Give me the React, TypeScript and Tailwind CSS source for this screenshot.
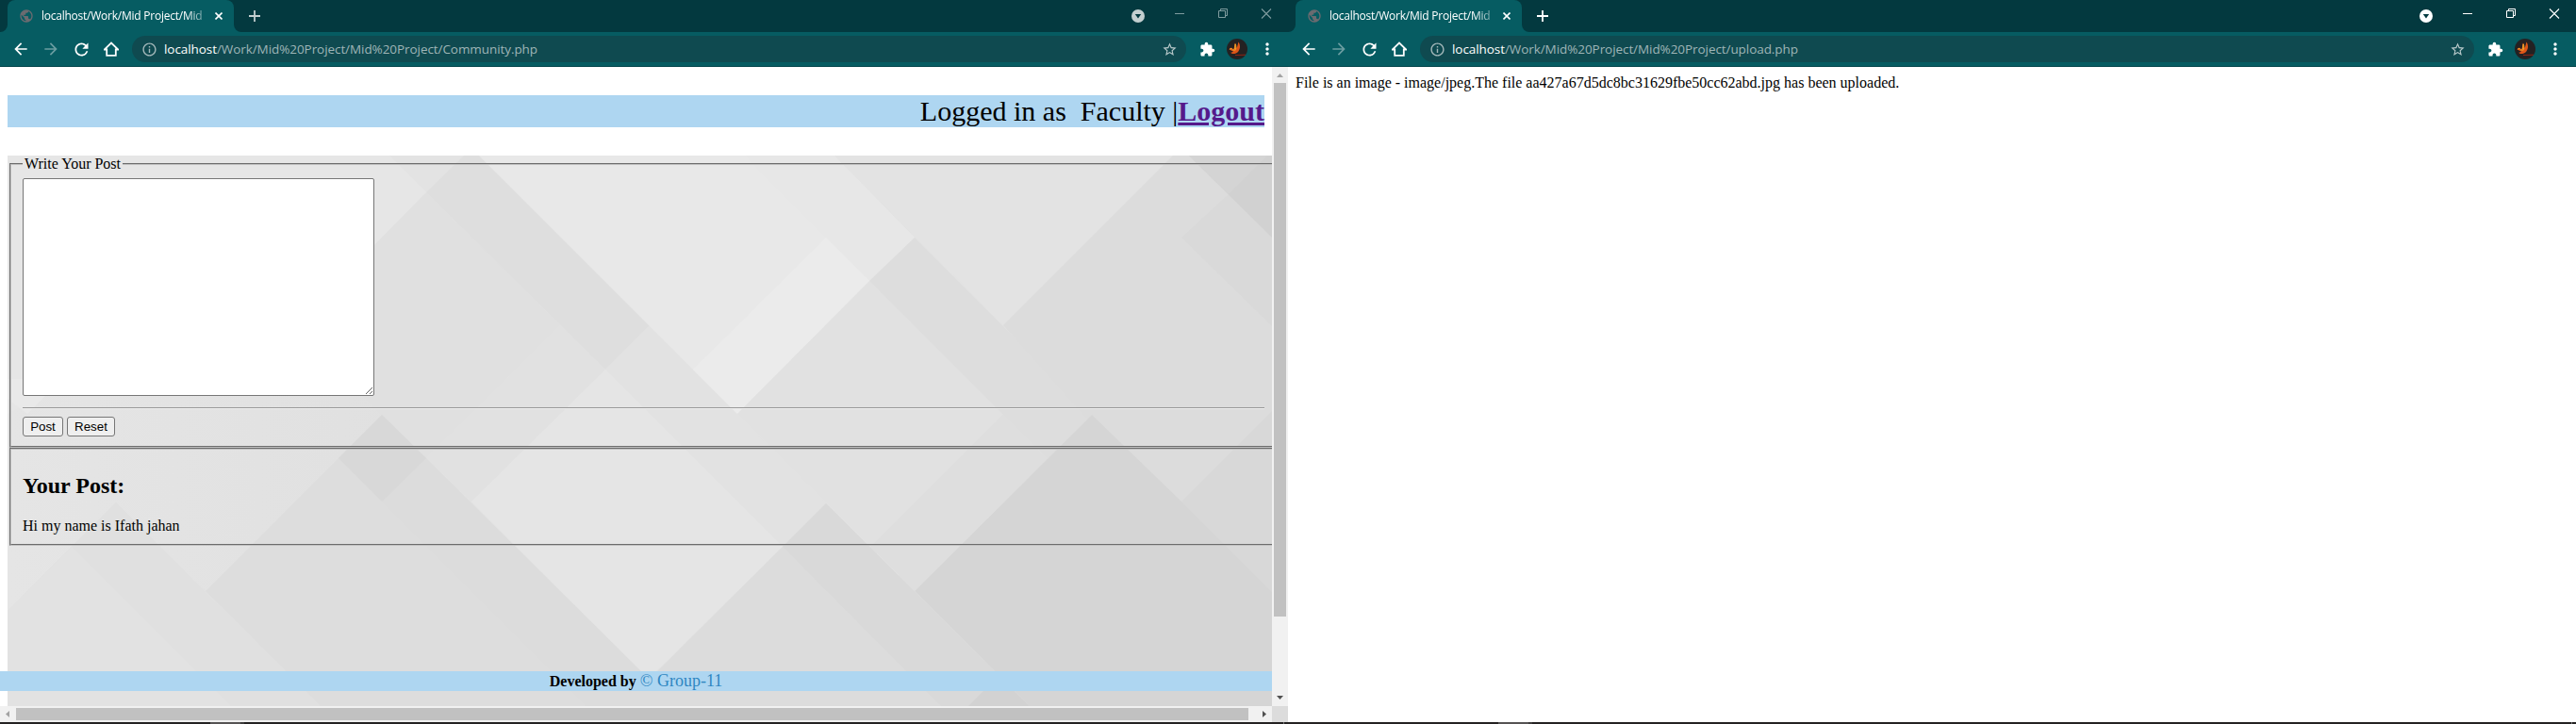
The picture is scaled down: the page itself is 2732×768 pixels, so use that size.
import React from "react";
import { MdArrowBack, MdArrowForward, MdRefresh, MdInfoOutline, MdStarBorder, MdExtension, MdMoreVert, MdPublic } from "react-icons/md";

function TitleBar({ active }: { active: boolean }) {
  const tone = active ? "text-white" : "text-[#7f9c9f]";
  return (
    <div className="flex h-[34px] bg-[#03393f]">
      <div className="flex w-2 shrink-0 items-end bg-[#065c62]">
        <div className="h-full w-2 rounded-br-lg bg-[#03393f]" />
      </div>
      <div className="flex w-[240px] shrink-0 items-center rounded-t-lg bg-[#065c62] pl-[12px]">
        <MdPublic className="size-4 shrink-0 text-[#6b6b70]" />
        <div className="ml-2 w-[176px] [mask-image:linear-gradient(to_right,black_154px,transparent_182px)]">
          <div className="whitespace-nowrap font-['Open_Sans',sans-serif] text-[12px] leading-4 tracking-[-0.24px] text-white">
            localhost/Work/Mid Project/Mid
          </div>
        </div>
        <svg className="ml-[8px] size-2 shrink-0" viewBox="0 0 8 8">
          <path d="M0.5 0.5L7.5 7.5M7.5 0.5L0.5 7.5" stroke="white" strokeWidth="1.6" />
        </svg>
      </div>
      <div className="w-2 shrink-0 bg-[#065c62]">
        <div className="h-full w-2 rounded-bl-lg bg-[#03393f]" />
      </div>
      <div className={"flex flex-1 items-center pl-[8px] " + (active ? "text-white" : "text-[#c3cfd0]")}>
        <svg className="size-3" viewBox="0 0 12 12">
          <path d="M6 0V12M0 6H12" stroke="currentColor" strokeWidth="1.8" />
        </svg>
        <svg className="ml-auto size-[14px]" viewBox="0 0 14 14">
          <circle cx="7" cy="7" r="7" fill="currentColor" />
          <path d="M3.8 5H10.2L7 9.4Z" fill="#03393f" />
        </svg>
      </div>
      <div className={"ml-[14px] flex h-7 w-[138px] shrink-0 items-center " + tone}>
        <svg className="h-[11px] w-[46px]" viewBox="0 0 46 11">
          <path d="M18 5.5H28" stroke="currentColor" />
        </svg>
        <svg className="h-[11px] w-[46px]" viewBox="0 0 46 11">
          <path d="M18.5 2.5H25.5V9.5H18.5ZM20.5 2.5V0.5H27.5V7.5H25.5" fill="none" stroke="currentColor" />
        </svg>
        <svg className="h-[11px] w-[46px]" viewBox="0 0 46 11">
          <path d="M18 0.5L28 10.5M28 0.5L18 10.5" stroke="currentColor" strokeWidth="1.1" />
        </svg>
      </div>
    </div>
  );
}

function Avatar() {
  return (
    <svg className="size-[22px]" viewBox="0 0 22 22">
      <circle cx="11" cy="11" r="11" fill="#242122" />
      <path d="M2.5 11.5C4 9 5.6 9.4 6.8 11.6C8.6 10 7.6 7 9 4.5C10 6 9.6 8.4 10.6 10C11.8 8 11.6 5.5 12.6 3.6C14.6 7 14.6 10.6 12.4 13.4C10 16.4 5.5 17 4.2 14.8C6 14.8 7 14 6.5 12.8C5 13.5 4 11.5 2.5 11.5Z" fill="#de5518" />
      <path d="M3 11.2C5 9.8 6 11 7 12.6C9.3 11 8.4 8 9.2 5.8C10.2 8 10.2 10.6 8.6 12.8" fill="none" stroke="#f3b02c" strokeWidth="0.9" />
      <path d="M9 17.5L20 17.2" stroke="#8e2516" />
    </svg>
  );
}

function Toolbar({ path }: { path: string }) {
  return (
    <div className="flex h-[37px] items-center border-b border-[#03454b] bg-[#065c62] pl-[6px] text-white">
      <div className="flex w-8 justify-center"><MdArrowBack className="size-[20px]" /></div>
      <div className="flex w-8 justify-center"><MdArrowForward className="size-[20px] text-[#6b9da1]" /></div>
      <div className="flex w-8 justify-center"><MdRefresh className="size-[21px]" /></div>
      <div className="flex w-8 justify-center">
        <svg className="size-4" viewBox="0 0 16 16">
          <path d="M0.7 8.5H3.2V14.9H12.8V8.5H15.3L8 1.5Z" fill="none" stroke="white" strokeWidth="1.8" />
        </svg>
      </div>
      <div className="ml-[6px] flex h-7 w-[1118px] items-center rounded-full bg-[#0f4a50] pl-[10px] pr-[9px]">
        <MdInfoOutline className="size-[17px] text-[#a5b9bb]" />
        <div className="ml-[7px] whitespace-nowrap font-['Open_Sans',sans-serif] text-[13.5px] leading-5 tracking-[-0.07px] text-[#9fb5b7]">
          <span className="text-white">localhost</span>{path}
        </div>
        <MdStarBorder className="ml-auto size-[17px] text-[#b7c8c9]" />
      </div>
      <div className="ml-[6px] flex w-8 justify-center"><MdExtension className="size-[17px]" /></div>
      <div className="flex w-8 justify-center"><Avatar /></div>
      <div className="flex w-8 justify-center"><MdMoreVert className="size-5" /></div>
    </div>
  );
}

function Taskbar() {
  return (
    <div className="flex h-[2px] bg-[#242222] pl-[223px]">
      <div className="w-[32px] bg-[#555353]" />
      <div className="w-[4px] bg-[#3d3b3b]" />
      <div className="ml-auto mr-1 w-px bg-[#777]" />
    </div>
  );
}

function DiamondBackdrop() {
  return (
    <svg className="absolute inset-0 h-[584px] w-[1341px]" viewBox="8 165 1341 584">
      <defs>
        <linearGradient id="slope" x1="0" y1="0" x2="1" y2="0">
          <stop offset="0" stopColor="#e5e5e5" />
          <stop offset="1" stopColor="#e0e0e0" />
        </linearGradient>
      </defs>
      <rect x="8" y="165" width="1341" height="584" fill="#e2e2e2" />
      <path d="M8 165H492L218 439L8 620Z" fill="#e6e6e6" />
      <path d="M413 165H492L452 204Z" fill="#e3e3e3" />
      <path d="M8 439L76 402H397L452 486L218 627L123 533L8 648Z" fill="url(#slope)" />
      <path d="M8 402H66L29 439L8 423Z" fill="#e9e9e9" />
      <path d="M397 260L452 204L594 345L452 486L405 440L290 325Z" fill="#e0e0e0" />
      <path d="M492 165H508L689 345L642 392L452 204Z" fill="#dedede" />
      <path d="M594 345L642 392L500 532L452 486Z" fill="#e1e1e1" />
      <path d="M689 345L876 534L830 580L642 392Z" fill="#e2e2e2" />
      <path d="M642 392L830 580L688 720L500 532Z" fill="#e5e5e5" />
      <path d="M508 165H885L970 252L782 439Z" fill="#e8e8e8" />
      <path d="M790 165H885L970 252L922 298Z" fill="#e7e7e7" />
      <path d="M876 252L922 298L782 439L735 392Z" fill="#ebebeb" />
      <path d="M782 439L922 298L1064 439L923 580Z" fill="#e1e1e1" />
      <path d="M970 252L1158 440L1111 487L922 298Z" fill="#dddddd" />
      <path d="M1064 439L1111 487L970 627L923 580Z" fill="#dedede" />
      <path d="M885 165H1244L1064 345Z" fill="#e3e3e3" />
      <path d="M1244 165H1349V640L1158 450L1064 345Z" fill="#dcdcdc" />
      <path d="M1303 206L1349 160V346L1253 252Z" fill="#d9d9d9" />
      <path d="M1261 165H1349V252Z" fill="#d1d1d1" />
      <path d="M1261 165H1344L1303 206Z" fill="#d4d4d4" />
      <path d="M8 648L123 533L340 749H8Z" fill="#e0e0e0" />
      <path d="M8 648L76 580L245 749H8Z" fill="#e2e2e2" />
      <path d="M405 440L717 749H340L218 627Z" fill="#dddddd" />
      <path d="M405 532L452 486L717 749H622Z" fill="#dcdcdc" />
      <path d="M405 440L452 486L405 532L359 486Z" fill="#d8d8d8" />
      <path d="M876 534L1092 749H660Z" fill="#dcdcdc" />
      <path d="M876 534L1092 749H998L830 580Z" fill="#d9d9d9" />
      <path d="M1349 436V640L1253 532Z" fill="#d8d8d8" />
      <path d="M1158 440L1253 532L1349 628V749H1092L970 627Z" fill="#d5d5d5" />
      <path d="M1059 717L1092 749H1027Z" fill="#d2d2d2" />
    </svg>
  );
}

const fieldsetClass = "border-2 border-[#c0c0c0] [border-style:groove] w-[1400px] px-3";

function CommunityWindow() {
  return (
    <section className="flex w-[1366px] flex-col">
      <TitleBar active={false} />
      <Toolbar path="/Work/Mid%20Project/Mid%20Project/Community.php" />
      <div className="flex h-[678px]">
        <div className="relative w-[1349px] overflow-hidden pl-2 pt-[30px] font-['Liberation_Serif',serif] text-black">
          <div className="mr-2 h-[34px] whitespace-pre bg-[#aed6f1] text-right text-[30px] leading-[34px]">
            {"Logged in as  Faculty |"}
            <b className="text-[#551a8b] underline">Logout</b>
          </div>
          <div className="relative mt-[30px] h-[584px] overflow-hidden pl-[2px]">
            <DiamondBackdrop />
            <div className="relative">
              <fieldset className={fieldsetClass + " h-[310px]"}>
                <legend className="h-[18px] px-[2px] text-[16px] leading-[18px]">Write Your Post</legend>
                <textarea className="mt-[6px] block h-[231px] w-[373px] resize rounded-[2px] border border-[#767676] bg-white" />
                <div className="mt-3 h-[2px] w-[1317px] border-b border-t border-b-[#eeeeee] border-t-[#9a9a9a]" />
                <div className="mt-2 flex gap-1 font-['Liberation_Sans',sans-serif] text-[13.33px] leading-[15px]">
                  <button className="h-[21px] w-[43px] rounded-[3px] border border-[#767676] bg-[#efefef]">Post</button>
                  <button className="h-[21px] w-[51px] rounded-[3px] border border-[#767676] bg-[#efefef]">Reset</button>
                </div>
              </fieldset>
              <fieldset className={fieldsetClass + " h-[104px]"}>
                <h2 className="mt-[25px] text-[24px] font-bold leading-[27px]">Your Post:</h2>
                <p className="mt-[20px] text-[16px] leading-[18px]">Hi my name is Ifath jahan</p>
              </fieldset>
            </div>
          </div>
          <footer className="absolute bottom-4 left-0 h-[21px] w-full bg-[#aed6f1] text-center text-[16px] leading-[21px]">
            <b>Developed by</b> <span className="text-[18px] text-[#2e86c1]">© Group-11</span>
          </footer>
        </div>
        <div className="flex w-[17px] flex-col items-center bg-[#f1f1f1]">
          <svg className="size-[17px]" viewBox="0 0 17 17"><path d="M5 11L8.5 7L12 11Z" fill="#a3a3a3" /></svg>
          <div className="h-[566px] w-[13px] bg-[#c1c1c1]" />
          <svg className="mt-auto size-[17px]" viewBox="0 0 17 17"><path d="M5 6H12L8.5 10Z" fill="#505050" /></svg>
        </div>
      </div>
      <div className="flex h-[17px] items-center bg-[#f1f1f1]">
        <svg className="size-[17px]" viewBox="0 0 17 17"><path d="M10 5V12L6 8.5Z" fill="#a3a3a3" /></svg>
        <div className="h-[13px] w-[1307px] bg-[#c1c1c1]" />
        <svg className="ml-auto size-[17px]" viewBox="0 0 17 17"><path d="M7 5V12L11 8.5Z" fill="#505050" /></svg>
        <div className="size-[17px] bg-[#dcdcdc]" />
      </div>
      <Taskbar />
    </section>
  );
}

function UploadWindow() {
  return (
    <section className="flex w-[1366px] flex-col">
      <TitleBar active />
      <Toolbar path="/Work/Mid%20Project/Mid%20Project/upload.php" />
      <div className="h-[695px] bg-white px-2 pt-2 font-['Liberation_Serif',serif] text-[16px] leading-[18px] text-black">
        File is an image - image/jpeg.The file aa427a67d5dc8bc31629fbe50cc62abd.jpg has been uploaded.
      </div>
      <Taskbar />
    </section>
  );
}

export default function App() {
  return (
    <main className="flex h-[768px] w-[2732px] overflow-hidden bg-white">
      <CommunityWindow />
      <UploadWindow />
    </main>
  );
}
